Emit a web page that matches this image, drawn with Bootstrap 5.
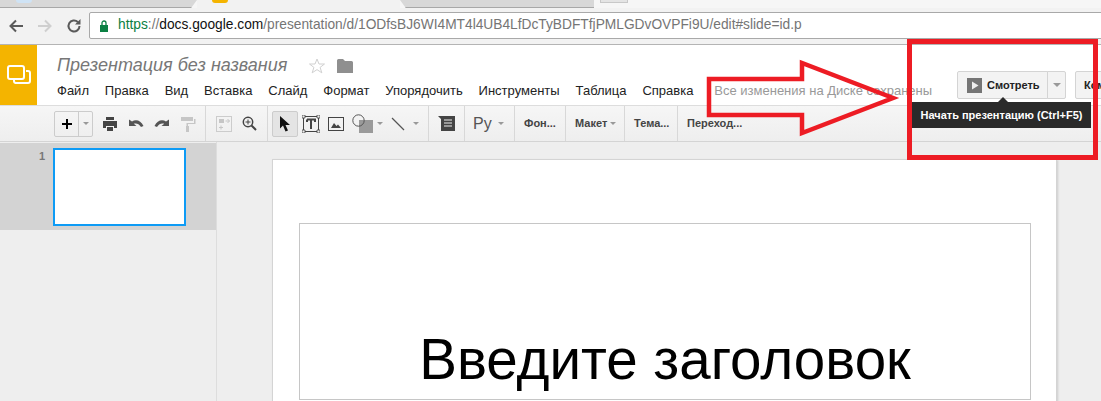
<!DOCTYPE html>
<html>
<head>
    <title>Презентация без названия</title>
    <link rel="stylesheet" href="https://cdn.jsdelivr.net/npm/bootstrap@5.3.0/dist/css/bootstrap.min.css">
    <style>
        html, body { height: 401px; overflow: hidden; }
        body { font-family: "Liberation Sans", Arial, sans-serif; background: #eee; color: #222; width: 1101px; }
        .tab-strip { height: 8px; background: #f6f6f6; }
        .tab-item { height: 8px; background: #d8d8d8; border-bottom: 1px solid #a8a8a8; overflow: hidden; }
        .tab-one { width: 197px; clip-path: polygon(0 0, 100% 0, 97% 100%, 0 100%); }
        .tab-active { width: 203px; background: #f2f2f2; border-bottom: 0; }
        .tab-three { width: 194px; clip-path: polygon(0 0, 100% 0, 100% 100%, 3% 100%); }
        .tab-new { width: 28px; height: 3px; margin-left: 6px; background: #e4e4e4; border: 1px solid #c8c8c8; border-top: 0; }
        .fav-dot { display: block; height: 3px; width: 16px; border-radius: 0 0 3px 3px; }
        .addr-bar { height: 37px; padding-top: 4px; padding-left: 8px; background: #f2f2f2; border-bottom: 1px solid #b4b4b4; }
        .addr-nav { width: 81px; height: 27px; gap: 13px; flex-shrink: 0; }
        .omni { flex: 1; height: 27px; margin-right: -4px; background: #fff; border: 1px solid #a9a9a9; border-radius: 2px; padding-left: 10px; font-size: 13.75px; white-space: nowrap; overflow: hidden; }
        .omni .u-green { color: #0b8043; }
        .omni .u-grey { color: #757575; }
        .omni .u-dark { color: #111; }
        .lock-ico { margin-right: 10px; }
        .app-head { height: 61px; background: #fff; border-bottom: 1px solid #ddd; }
        .logo-box { width: 37px; height: 60px; background: #f4b400; flex-shrink: 0; }
        .head-main { flex: 1; padding-left: 20px; min-width: 0; }
        .doc-title { font-size: 18px; font-style: italic; color: #777; height: 21px; line-height: 21px; margin-top: 10px; }
        .title-icons { gap: 12px; margin-left: 22px; }
        .menu-line { margin-top: 5px; height: 20px; font-size: 13px; color: #222; white-space: nowrap; }
        .menu-line .nav-link { padding: 0; color: #222; margin-right: 15.9px; }
        .saved-note { margin-left: 5px; color: #999; font-size: 13px; }
        .head-right { width: 144px; flex-shrink: 0; padding-top: 26px; gap: 9px; overflow: hidden; }
        .watch-group { height: 28px; flex-shrink: 0; }
        .watch-group .btn { --bs-btn-border-radius: 2px; background: #f3f3f3; border: 1px solid #d4d4d4; color: #222; font-size: 11px; font-weight: 700; height: 28px; padding: 0; }
        .btn-watch { width: 91px; gap: 5px; padding-left: 9px !important; }
        .btn-drop { width: 19px; flex: 0 0 19px !important; }
        .btn-next { flex-shrink: 0; width: 90px; height: 28px; background: #f3f3f3; border: 1px solid #d4d4d4; border-radius: 2px; font-size: 11px; font-weight: 700; padding: 0 0 0 8px; color: #222; text-align: left; }
        .tool-line { height: 36px; background: linear-gradient(#f6f6f6, #eee); border-bottom: 1px solid #d4d4d4; }
        .tool-sect { height: 35px; border-right: 1px solid #d8d8d8; flex-shrink: 0; }
        .sect-a { width: 206px; padding-left: 54px; gap: 10px; }
        .sect-b { width: 62px; padding-left: 10px; gap: 10px; }
        .sect-c { width: 161px; padding-left: 4px; }
        .sect-d { width: 36px; padding-left: 9px; }
        .sect-e { width: 50px; padding-left: 8px; gap: 6px; font-size: 16px; color: #555; }
        .sect-txt { font-size: 11px; font-weight: 700; color: #444; white-space: nowrap; padding-left: 9px; gap: 3px; }
        .sect-f { width: 51px; }
        .sect-g { width: 59px; }
        .sect-h { width: 53px; }
        .sect-i { border-right: 0; width: 100px; }
        .plus-btn { width: 39px; height: 26px; margin-right: -1px; border: 1px solid #ccc; border-radius: 2px; flex-shrink: 0; }
        .plus-main { width: 24px; height: 24px; border-right: 1px solid #ccc; }
        .plus-side { width: 13px; height: 24px; }
        .arrow-btn { width: 26px; height: 26px; background: #e4e4e4; border: 1px solid #ccc; border-radius: 2px; margin-right: 4px; }
        .caret-down { width: 0; height: 0; border-left: 3px solid transparent; border-right: 3px solid transparent; border-top: 3px solid #999; flex-shrink: 0; }
        .caret-big { border-left-width: 4px; border-right-width: 4px; border-top-width: 4px; }
        .work-area { height: 259px; overflow: hidden; }
        .film-strip { width: 217px; flex-shrink: 0; background: #eee; border-right: 1px solid #ddd; padding-top: 1px; }
        .film-item { height: 87px; background: #d3d3d3; padding-top: 5px; }
        .film-num { width: 53px; padding-right: 8px; text-align: right; font-size: 11px; font-weight: 700; color: #777; }
        .film-thumb { width: 133px; height: 78px; background: #fff; border: 2px solid #0d9bf5; }
        .canvas-area { flex: 1; padding: 17px 0 0 55px; }
        .slide-page { width: 785px; height: 242px; background: #fff; border: 1px solid #d4d4d4; border-bottom: 0; box-shadow: 1px 1px 2px #ccc; padding: 63px 0 0 26px; }
        .title-box { width: 732px; height: 177px; border: 1px solid #c6c6c6; }
        .title-text { font-size: 56.5px; line-height: 1; color: #000; padding-bottom: 11px; }
        .overlay-draw { top: 0; left: 0; width: 1101px; height: 401px; pointer-events: none; }
        .tip-box { top: 102px; left: 912px; width: 179px; height: 26px; background: #2a2a2a; color: #fff; font-size: 11px; font-weight: 700; white-space: nowrap; }
        .tip-notch { top: 97px; left: 998px; width: 0; height: 0; border-left: 5px solid transparent; border-right: 5px solid transparent; border-bottom: 5px solid #2a2a2a; }
    </style>
</head>
<body class="position-relative">
    <div class="tab-strip d-flex">
        <div class="tab-item tab-one"><span class="fav-dot ms-3" style="background:#cfe3f5"></span></div>
        <div class="tab-item tab-active"><span class="fav-dot" style="background:#f4b400;margin-left:15px"></span></div>
        <div class="tab-item tab-three"></div>
        <div class="tab-new"></div>
    </div>

    <div class="addr-bar d-flex">
        <div class="addr-nav d-flex align-items-center">
            <svg width="16" height="16" viewBox="0 0 16 16"><path d="M15 8H3M8 2.5 2.5 8 8 13.5" fill="none" stroke="#5a5a5a" stroke-width="2"/></svg>
            <svg width="16" height="16" viewBox="0 0 16 16"><path d="M1 8h12M8 2.5 13.5 8 8 13.5" fill="none" stroke="#cfcfcf" stroke-width="2"/></svg>
            <svg width="16" height="16" viewBox="0 0 16 16"><path d="M13.5 8a5.5 5.5 0 1 1-1.7-4" fill="none" stroke="#5a5a5a" stroke-width="2"/><path d="M14.5 1v5.5H9z" fill="#5a5a5a"/></svg>
        </div>
        <div class="omni d-flex align-items-center">
            <svg class="lock-ico flex-shrink-0" width="8" height="12" viewBox="0 0 8 12"><path d="M0 5h8v7H0z" fill="#0b8043"/><path d="M2 5V3a2 2 0 0 1 4 0v2" fill="none" stroke="#0b8043" stroke-width="1.3"/></svg>
            <span><span class="u-green">https</span><span class="u-grey">://</span><span class="u-dark">docs.google.com</span><span class="u-grey">/presentation/d/1ODfsBJ6WI4MT4l4UB4LfDcTyBDFTfjPMLGDvOVPFi9U/edit#slide=id.p</span></span>
        </div>
    </div>

    <div class="app-head d-flex">
        <div class="logo-box d-flex align-items-center justify-content-center">
            <svg width="24" height="20" viewBox="0 0 24 20"><rect x="1" y="1" width="16" height="13" rx="2" fill="none" stroke="#fff" stroke-width="2"/><path d="M8 18h13a2 2 0 0 0 2-2V8a2 2 0 0 0-2-2h-2" fill="none" stroke="#fff" stroke-width="2"/><path d="M7 14v2a2 2 0 0 0 2 2" fill="none" stroke="#fff" stroke-width="2"/></svg>
        </div>
        <div class="head-main">
            <div class="d-flex align-items-center doc-title">
                <span>Презентация без названия</span>
                <div class="d-flex align-items-center title-icons">
                    <svg width="16" height="16" viewBox="0 0 16 16"><path d="M8 1l2 5h5.500l-4.400 3.400 1.700 5.400L8 11.600 3.200 14.800l1.700-5.400L.5 6H6z" fill="none" stroke="#d0d0d0"/></svg>
                    <svg width="16" height="14" viewBox="0 0 16 14"><path d="M0 1.500A1.500 1.500 0 0 1 1.500 0H6l2 2h6.500A1.500 1.500 0 0 1 16 3.500V14H0z" fill="#8f8f8f"/></svg>
                </div>
            </div>
            <nav class="nav menu-line align-items-center flex-nowrap">
                <a class="nav-link" href="#">Файл</a>
                <a class="nav-link" href="#">Правка</a>
                <a class="nav-link" href="#">Вид</a>
                <a class="nav-link" href="#">Вставка</a>
                <a class="nav-link" href="#">Слайд</a>
                <a class="nav-link" href="#">Формат</a>
                <a class="nav-link" href="#">Упорядочить</a>
                <a class="nav-link" href="#">Инструменты</a>
                <a class="nav-link" href="#">Таблица</a>
                <a class="nav-link" href="#">Справка</a>
                <span class="saved-note">Все изменения на Диске сохранены</span>
            </nav>
        </div>
        <div class="head-right d-flex align-items-start">
            <div class="btn-group watch-group">
                <button class="btn btn-watch d-flex align-items-center">
                    <svg width="15" height="15" viewBox="0 0 15 15"><rect width="15" height="15" fill="#757575"/><path d="M5 3.500 11.500 7.500 5 11.500z" fill="#eee"/></svg>
                    <span>Смотреть</span>
                </button>
                <button class="btn btn-drop d-flex align-items-center justify-content-center"><span class="caret-down caret-big"></span></button>
            </div>
            <button class="btn-next">Комментарии</button>
        </div>
    </div>

    <div class="tool-line d-flex">
        <div class="tool-sect sect-a d-flex align-items-center">
            <div class="plus-btn d-flex align-items-center">
                <div class="plus-main d-flex align-items-center justify-content-center">
                    <svg width="10" height="10" viewBox="0 0 10 10"><path d="M5 0v10M0 5h10" stroke="#000" stroke-width="2"/></svg>
                </div>
                <div class="plus-side d-flex align-items-center justify-content-center"><span class="caret-down"></span></div>
            </div>
            <svg width="16" height="16" viewBox="0 0 16 16"><path d="M4 1h8v3H4zM1 5h14v7h-3v-2H4v2H1z" fill="#444"/><path d="M5 11h6v4H5z" fill="#444"/></svg>
            <svg width="16" height="12" viewBox="0 0 16 12"><path d="M4 3.500C8 1 13 2.500 15.500 8l-2.500 1C11 5.500 8 5 5.800 5.800L8.500 8H1V1.500z" fill="#555"/></svg>
            <svg width="16" height="12" viewBox="0 0 16 12"><path d="M12 3.500C8 1 3 2.500.5 8L3 9c2-3.500 5-4 7.200-3.200L7.500 8H15V1.500z" fill="#555"/></svg>
            <svg width="16" height="16" viewBox="0 0 16 16"><path d="M1 1h12v4H1zM14 3h1.500v5H8v2H6.500V7H14zM6 10h3v6H6z" fill="#c6c6c6"/></svg>
        </div>
        <div class="tool-sect sect-b d-flex align-items-center">
            <svg width="16" height="16" viewBox="0 0 16 16"><rect x=".5" y=".5" width="15" height="15" fill="none" stroke="#ccc"/><path d="M3 3h5v4H3z" fill="#c6c6c6"/><path d="M9.500 5h4M11.500 3l2 2-2 2M5 9.500v4M3 11.500h4" fill="none" stroke="#c6c6c6"/></svg>
            <svg width="15" height="15" viewBox="0 0 15 15"><circle cx="6" cy="6" r="4.700" fill="none" stroke="#444" stroke-width="1.500"/><path d="M6 3.500v5M3.500 6h5" stroke="#444"/><path d="M9.500 9.500 14 14" stroke="#444" stroke-width="2"/></svg>
        </div>
        <div class="tool-sect sect-c d-flex align-items-center">
            <div class="arrow-btn d-flex align-items-center justify-content-center">
                <svg width="12" height="16" viewBox="0 0 12 16"><path d="M1 0v12.500l3-3 2.500 6 2.500-1-2.500-5.500h4.500z" fill="#111"/></svg>
            </div>
            <svg width="18" height="18" viewBox="0 0 18 18"><rect x="1.500" y="1.500" width="15" height="15" fill="none" stroke="#444"/><path d="M0 0h3v3H0zM15 0h3v3h-3zM0 15h3v3H0zM15 15h3v3h-3z" fill="#eee" stroke="#444" stroke-width=".8"/><path d="M5 4.500h8V7M5 7V4.500M9 4.500V14" fill="none" stroke="#444" stroke-width="2"/></svg>
            <svg class="ms-2" width="16" height="14" viewBox="0 0 16 14"><rect x=".5" y=".5" width="15" height="13" fill="none" stroke="#444"/><path d="M3 11 6 6l2.500 3L10 7.500 13 11z" fill="#444"/></svg>
            <svg class="ms-2" width="21" height="19" viewBox="0 0 21 19"><rect x="7" y="6" width="14" height="13" fill="#9a9a9a"/><circle cx="6.500" cy="6.500" r="5.700" fill="none" stroke="#555"/></svg>
            <span class="caret-down ms-1"></span>
            <svg class="ms-2" width="14" height="14" viewBox="0 0 14 14"><path d="M1 1l12 12" stroke="#555" stroke-width="1.300"/></svg>
            <span class="caret-down ms-2"></span>
        </div>
        <div class="tool-sect sect-d d-flex align-items-center">
            <svg width="17" height="15" viewBox="0 0 17 15"><path d="M0 0h17v15H3V3z" fill="#444"/><path d="M6 4h8M6 7h8M6 10h8" stroke="#eee"/></svg>
        </div>
        <div class="tool-sect sect-e d-flex align-items-center"><span>Ру</span><span class="caret-down"></span></div>
        <div class="tool-sect sect-txt sect-f d-flex align-items-center">Фон...</div>
        <div class="tool-sect sect-txt sect-g d-flex align-items-center">Макет<span class="caret-down"></span></div>
        <div class="tool-sect sect-txt sect-h d-flex align-items-center">Тема...</div>
        <div class="tool-sect sect-txt sect-i d-flex align-items-center">Переход...</div>
    </div>

    <div class="work-area d-flex">
        <div class="film-strip">
            <div class="film-item d-flex">
                <div class="film-num">1</div>
                <div class="film-thumb"></div>
            </div>
        </div>
        <div class="canvas-area">
            <div class="slide-page">
                <div class="title-box d-flex align-items-end justify-content-center">
                    <div class="title-text">Введите заголовок</div>
                </div>
            </div>
        </div>
    </div>

    <svg class="overlay-draw position-absolute" viewBox="0 0 1101 401">
        <polygon points="709,79 802,79 802,63 893,98 802,133 802,115 709,115" fill="none" stroke="#ed1c24" stroke-width="4.500"/>
        <rect x="909.500" y="41.500" width="186" height="116" fill="none" stroke="#ed1c24" stroke-width="5"/>
    </svg>
    <div class="tip-notch position-absolute"></div>
    <div class="tip-box position-absolute d-flex align-items-center justify-content-center">Начать презентацию (Ctrl+F5)</div>
</body>
</html>
